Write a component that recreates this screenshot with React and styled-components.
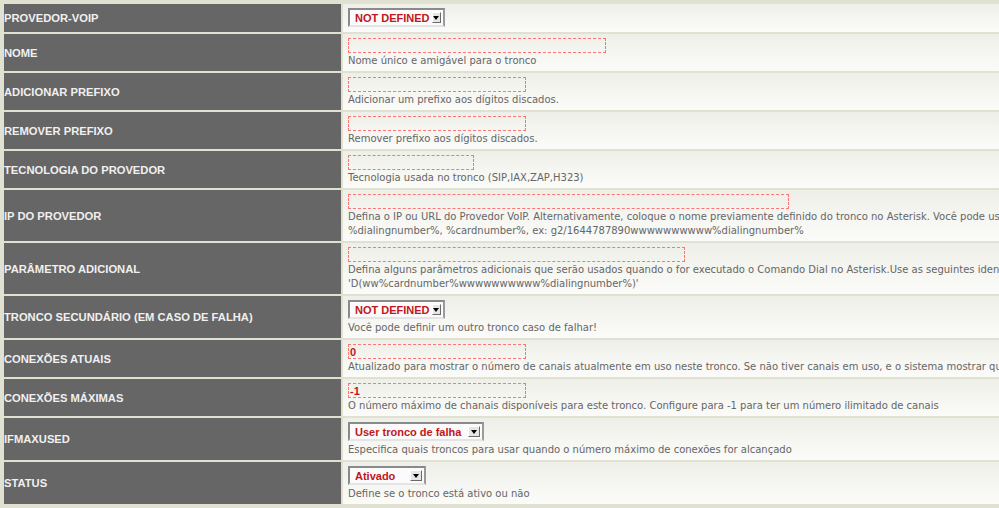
import React from 'react';
import styled, { createGlobalStyle } from 'styled-components';

const GlobalStyle = createGlobalStyle`
  html, body {
    margin: 0;
    padding: 0;
    background: #e1e1d1;
    overflow: hidden;
  }
`;

const Form = styled.div`
  display: flex;
  flex-direction: column;
  gap: 2px;
  padding: 4px 0 6px 4px;
  width: 1400px;
`;

const Row = styled.div`
  display: grid;
  grid-template-columns: 337px 1fr;
  column-gap: 2px;
`;

const Label = styled.div`
  display: flex;
  align-items: center;
  background: #666666;
  color: #f0f0f0;
  font: bold 11.2px "Liberation Sans", Arial, sans-serif;
  white-space: nowrap;
`;

const Cell = styled.div`
  display: flex;
  flex-direction: column;
  align-items: flex-start;
  padding: 4px 5px 3px;
  background: linear-gradient(#efefe9, #fbfbf9);
`;

const TextInput = styled.input`
  box-sizing: border-box;
  width: ${props => props.$w}px;
  height: 15px;
  margin: 0 0 1px;
  padding: 0 1px;
  border: 1px dashed #ff7575;
  background: transparent;
  color: #c0161c;
  font: bold 11px "Liberation Sans", Arial, sans-serif;
  outline: none;
`;

const SelectBox = styled.div`
  box-sizing: border-box;
  display: flex;
  align-items: center;
  justify-content: space-between;
  width: ${props => props.$w}px;
  height: 19px;
  margin-bottom: 2px;
  padding: 0 2px 0 5px;
  border: 2px solid;
  border-color: #8a8a8a #9a9a9a #e4e4e4 #8a8a8a;
  background: #fbfbfb;
  color: #c0161c;
  font: bold 11px "Liberation Sans", Arial, sans-serif;
  white-space: nowrap;
`;

const ArrowButton = styled.span`
  box-sizing: border-box;
  display: flex;
  align-items: center;
  justify-content: center;
  width: 12px;
  height: 11px;
  margin-left: 2px;
  border: 1px solid;
  border-color: #ffffff #6a6a6a #6a6a6a #ffffff;
  background: #e6e6e6;

  &:after {
    content: '';
    border-left: 3px solid transparent;
    border-right: 3px solid transparent;
    border-top: 4px solid #000;
  }
`;

const Hint = styled.div`
  color: #666666;
  font: 10px "DejaVu Sans", Verdana, sans-serif;
  line-height: 14px;
  white-space: nowrap;
`;

const Select = ({ w, children }) => (
  <SelectBox $w={w}>
    <span>{children}</span>
    <ArrowButton />
  </SelectBox>
);

const fields = [
  { label: 'PROVEDOR-VOIP', select: 'NOT DEFINED', w: 97 },
  { label: 'NOME', input: 258, hint: ['Nome único e amigável para o tronco'] },
  { label: 'ADICIONAR PREFIXO', input: 178, hint: ['Adicionar um prefixo aos dígitos discados.'] },
  { label: 'REMOVER PREFIXO', input: 178, hint: ['Remover prefixo aos dígitos discados.'] },
  { label: 'TECNOLOGIA DO PROVEDOR', input: 126, hint: ['Tecnologia usada no tronco (SIP,IAX,ZAP,H323)'] },
  {
    label: 'IP DO PROVEDOR',
    input: 441,
    hint: [
      'Defina o IP ou URL do Provedor VoIP. Alternativamente, coloque o nome previamente definido do tronco no Asterisk. Você pode usar as seguintes identificações:',
      '%dialingnumber%, %cardnumber%, ex: g2/1644787890wwwwwwwwww%dialingnumber%',
    ],
  },
  {
    label: 'PARÂMETRO ADICIONAL',
    input: 337,
    hint: [
      'Defina alguns parâmetros adicionais que serão usados quando o for executado o Comando Dial no Asterisk.Use as seguintes identificações:',
      "'D(ww%cardnumber%wwwwwwwwww%dialingnumber%)'",
    ],
  },
  {
    label: 'TRONCO SECUNDÁRIO (EM CASO DE FALHA)',
    select: 'NOT DEFINED',
    w: 97,
    hint: ['Você pode definir um outro tronco caso de falhar!'],
  },
  {
    label: 'CONEXÕES ATUAIS',
    input: 178,
    value: '0',
    hint: [
      'Atualizado para mostrar o número de canais atualmente em uso neste tronco. Se não tiver canais em uso, e o sistema mostrar que existem, reinicie o contador.',
    ],
  },
  {
    label: 'CONEXÕES MÁXIMAS',
    input: 178,
    value: '-1',
    hint: ['O número máximo de chanais disponíveis para este tronco. Configure para -1 para ter um número ilimitado de canais'],
  },
  {
    label: 'IFMAXUSED',
    select: 'User tronco de falha',
    w: 136,
    hint: ['Especifica quais troncos para usar quando o número máximo de conexões for alcançado'],
  },
  { label: 'STATUS', select: 'Ativado', w: 78, hint: ['Define se o tronco está ativo ou não'] },
];

export default function App() {
  return (
    <>
      <GlobalStyle />
      <Form>
        {fields.map(f => (
          <Row key={f.label}>
            <Label>{f.label}</Label>
            <Cell>
              {f.select && <Select w={f.w}>{f.select}</Select>}
              {f.input && <TextInput $w={f.input} readOnly defaultValue={f.value || ''} />}
              {f.hint && (
                <Hint>
                  {f.hint.map((line, i) => (
                    <div key={i}>{line}</div>
                  ))}
                </Hint>
              )}
            </Cell>
          </Row>
        ))}
      </Form>
    </>
  );
}
